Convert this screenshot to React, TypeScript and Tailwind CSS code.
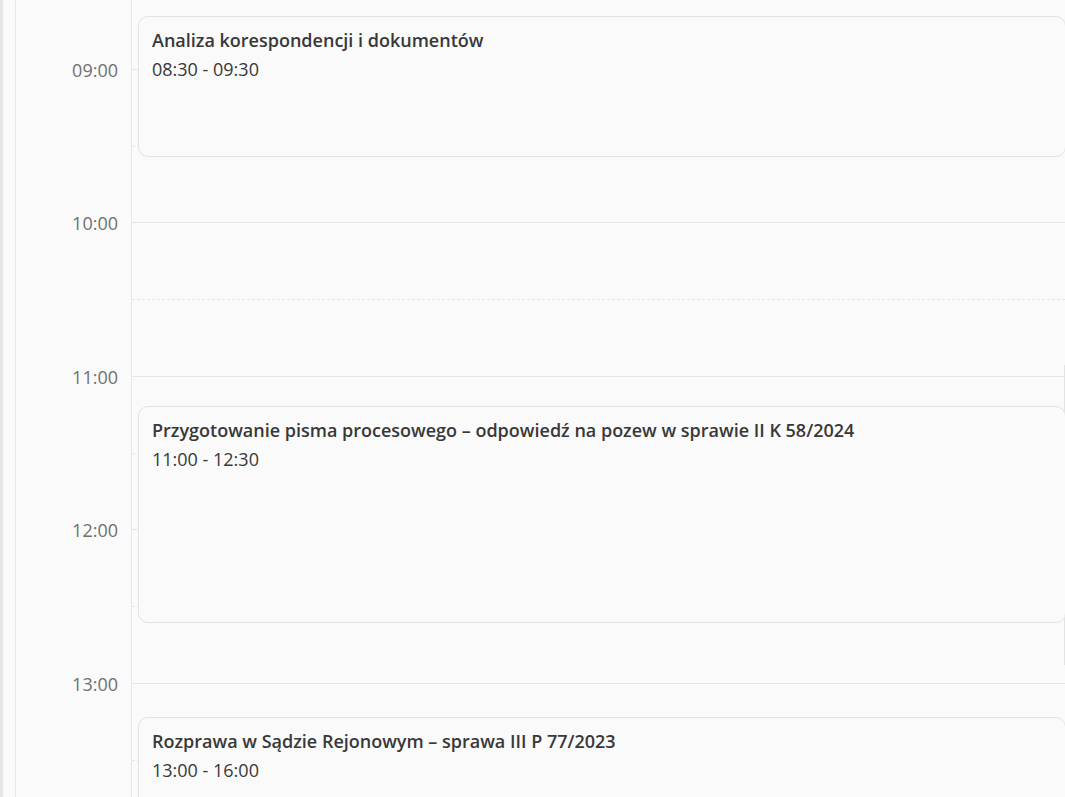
const slots = [
  { time: "08:30", hour: false },
  { time: "09:00", hour: true },
  { time: "09:30", hour: false },
  { time: "10:00", hour: true },
  { time: "10:30", hour: false },
  { time: "11:00", hour: true },
  { time: "11:30", hour: false },
  { time: "12:00", hour: true },
  { time: "12:30", hour: false },
  { time: "13:00", hour: true },
  { time: "13:30", hour: false },
];

const events = [
  {
    title: "Analiza korespondencji i dokumentów",
    time: "08:30 - 09:30",
    className: "top-[16px] h-[141px]",
  },
  {
    title: "Przygotowanie pisma procesowego – odpowiedź na pozew w sprawie II K 58/2024",
    time: "11:00 - 12:30",
    className: "top-[406px] h-[217px]",
  },
  {
    title: "Rozprawa w Sądzie Rejonowym – sprawa III P 77/2023",
    time: "13:00 - 16:00",
    className: "top-[717px] h-[300px]",
  },
];

export default function App() {
  return (
    <div
      className="flex h-[797px] w-[1065px] overflow-hidden bg-[#fafafa] text-[#333333]"
      style={{ fontFamily: '"Open Sans", "Noto Sans", sans-serif' }}
    >
      {/* left edge */}
      <div className="w-[3px] shrink-0 bg-[#e6e6e6]" />
      <div className="w-[12px] shrink-0" />

      <div className="relative flex-1 border-l border-[#e6e6e6]">
        {/* grid rows */}
        <div className="-mt-[8px] flex flex-col">
          {slots.map((s) => (
            <div key={s.time} className="flex h-[76.75px]">
              <div className="w-[116px] shrink-0 border-r border-[#e6e6e6] pr-[13px] text-right">
                {s.hour && (
                  <div className="-mt-[11px] text-[18px] leading-[24px] text-[#707070]">{s.time}</div>
                )}
              </div>
              <div
                className={
                  s.hour
                    ? "flex-1 border-t border-[#e6e6e6]"
                    : "flex-1 border-t border-dashed border-[#e6e6e6]"
                }
              />
            </div>
          ))}
        </div>

        {/* column edge on the right */}
        <div className="absolute left-[1048px] top-[365px] h-[300px] w-px bg-[#e3e3e3]" />

        {/* events */}
        {events.map((e) => (
          <div
            key={e.time}
            className={`absolute left-[122px] w-[928px] rounded-[10px] border border-[#e3e3e3] bg-[#fafafa] px-[13px] pt-[9px] ${e.className}`}
          >
            <div className="whitespace-nowrap text-[18px] font-semibold leading-[28px] text-[#383838]">
              {e.title}
            </div>
            <div className="whitespace-nowrap text-[18px] leading-[30px] text-[#383838]">{e.time}</div>
          </div>
        ))}
      </div>
    </div>
  );
}
